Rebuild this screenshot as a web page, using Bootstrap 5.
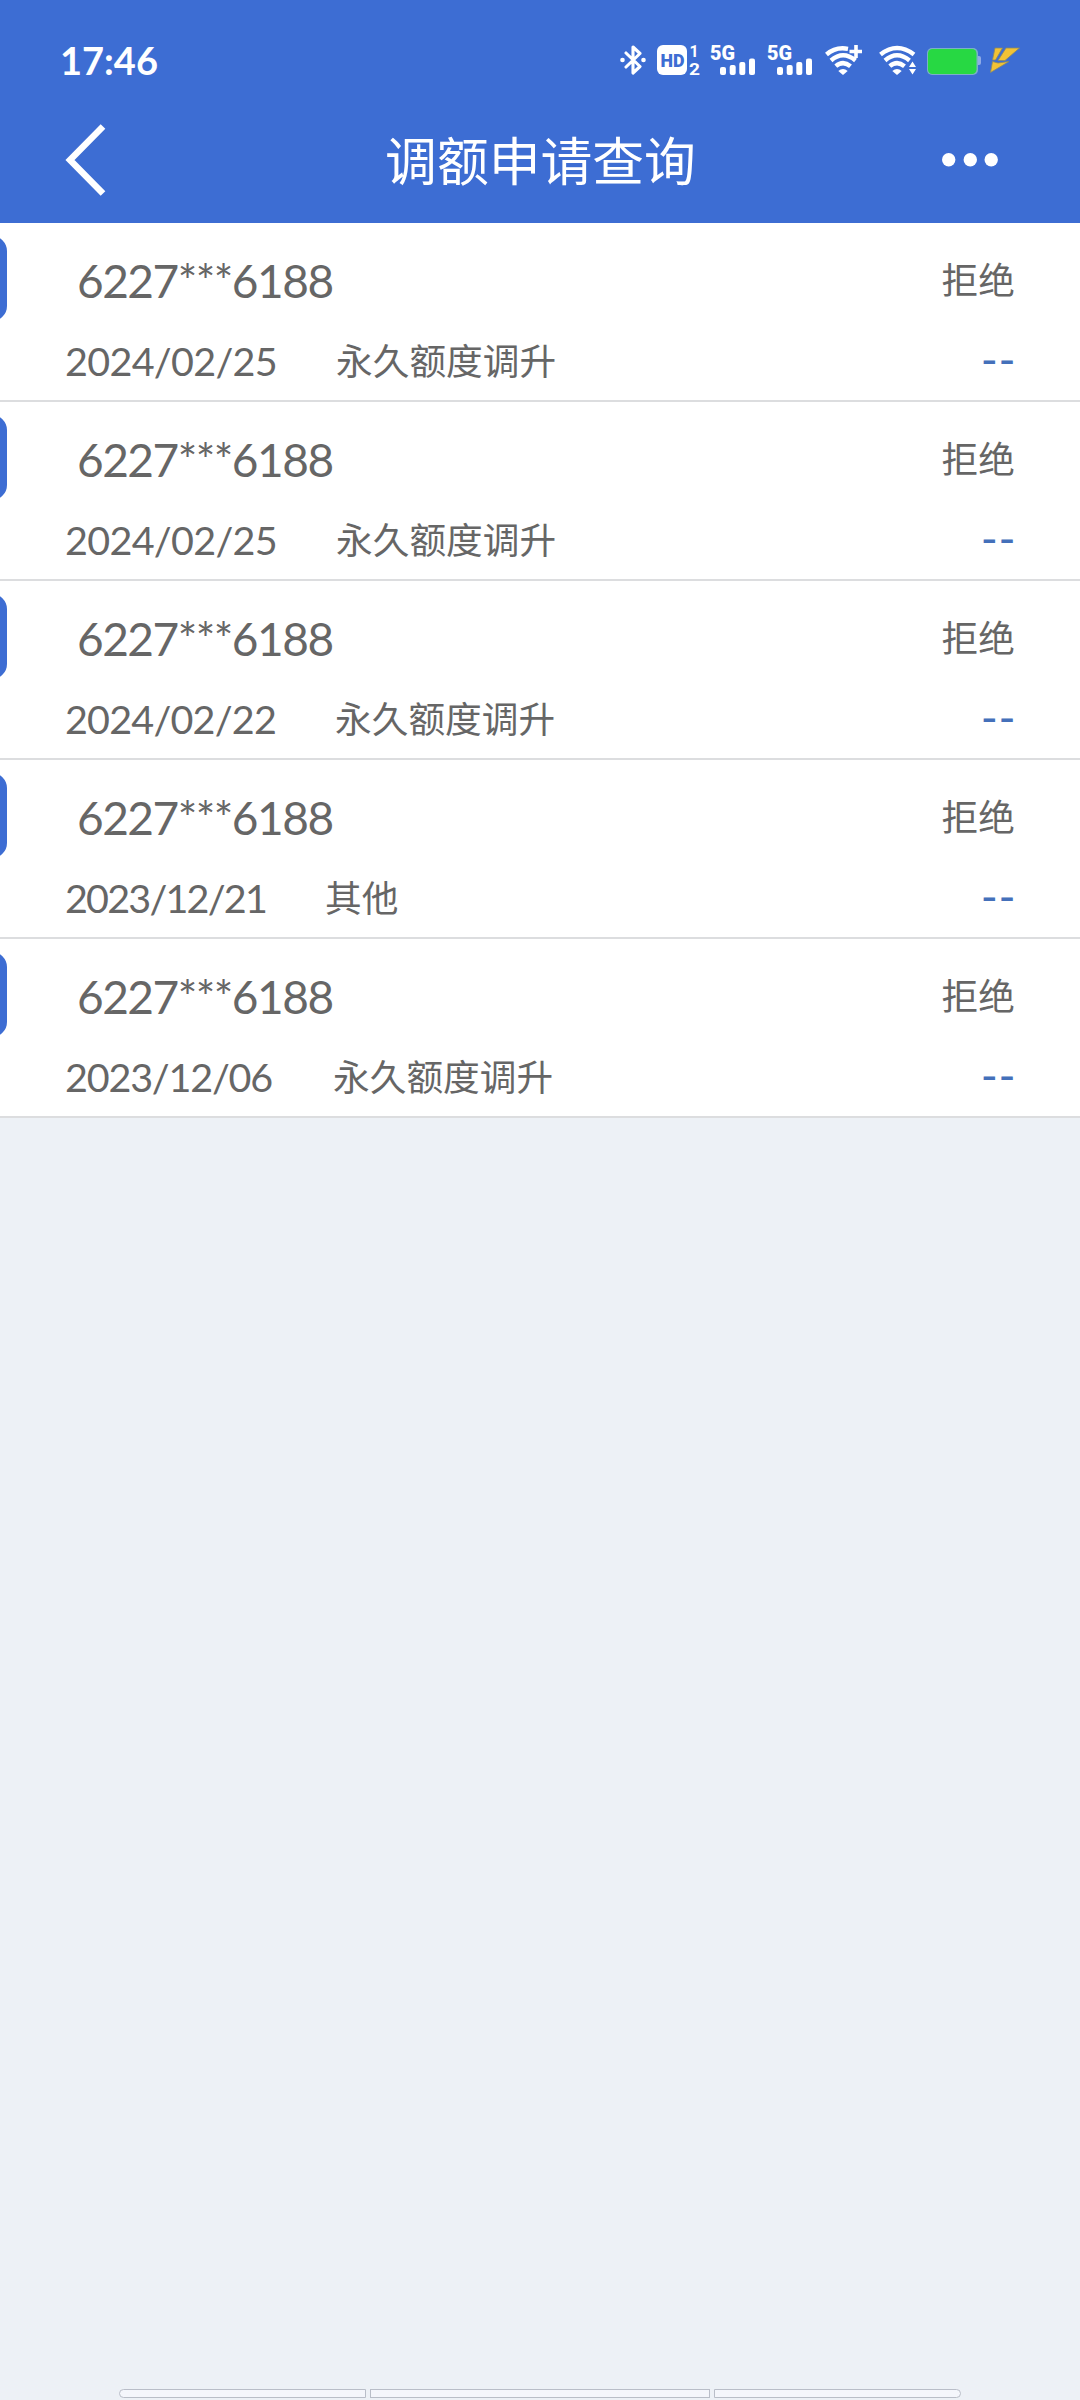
<!DOCTYPE html>
<html lang="zh-CN">
<head>
    <meta charset="UTF-8">
    <meta name="viewport" content="width=device-width, initial-scale=1.0">
    <title>调额申请查询</title>
    <link href="https://cdn.jsdelivr.net/npm/bootstrap@5.3.0/dist/css/bootstrap.min.css" rel="stylesheet">
    <style>
        body {
            background-color: #edf1f6;
            color: #666;
            font-family: Lato, "Noto Sans CJK SC", sans-serif;
            overflow: hidden;
        }
        .top-area {
            height: 223px;
            background-color: #3d6dd3;
        }
        .status-bar {
            height: 120px;
            padding: 0 60px;
        }
        .status-bar svg {
            display: block;
        }
        .clock {
            font-size: 38px;
            font-weight: 700;
            line-height: 120px;
        }
        .title-bar {
            height: 80px;
            padding: 0 82px 0 65px;
        }
        .page-title {
            font-size: 51.8px;
            font-weight: 400;
            line-height: 80px;
            margin-left: 33px;
            padding-top: 1px;
        }
        .record {
            height: 179px;
            border-bottom: 2px solid #dcdddf;
            padding: 0 66px 0 65px;
        }
        /* card thumbnail sliding in from the left edge */
        .card-tab {
            left: -93px;
            top: 13px;
            width: 100px;
            height: 85px;
            border-radius: 15px;
            background-color: #3d6dd3;
        }
        .line-top {
            height: 117px;
        }
        .line-bottom {
            height: 42px;
        }
        .acct {
            font-size: 46px;
            line-height: 115px;
            letter-spacing: -1.5px;
            margin-left: 12px;
            padding-bottom: 2px;
        }
        .apply-date {
            font-size: 39.5px;
            line-height: 42px;
            white-space: nowrap;
        }
        .kind, .result {
            font-size: 36.7px;
            line-height: 42px;
        }
        .result {
            padding-bottom: 3px;
            margin-right: -1px;
        }
        .amount {
            color: #4470ba;
            font-size: 46px;
            line-height: 37px;
            letter-spacing: 0.5px;
            margin-right: -2px;
        }
        .nav-hint {
            height: 9px;
            border: 1px solid #b9bec8;
            background-color: #f4f6fb;
        }
        .nav-hints {
            padding-bottom: 2px;
        }
    </style>
</head>
<body class="vh-100 d-flex flex-column">

<!-- Header -->
<header class="top-area text-white">
    <div class="status-bar d-flex align-items-center">
        <span class="clock">17:46</span>
        <div class="d-flex align-items-center ms-auto">
            <!-- Bluetooth -->
            <svg width="26" height="30" viewBox="0 0 26 30" fill="none" stroke="#fff" stroke-width="3.1" stroke-linejoin="round" stroke-linecap="round">
                <path d="M6 8 L20 21.5 L13 28 V2 L20 8.5 L6 22"/>
                <circle cx="2.5" cy="15" r="2.3" fill="#fff" stroke="none"/>
                <circle cx="23.5" cy="15" r="2.3" fill="#fff" stroke="none"/>
            </svg>
            <!-- HD 1/2 -->
            <svg style="margin-left: 11px" width="46" height="42" viewBox="0 -6 46 42" font-family="Roboto, sans-serif" font-weight="900">
                <rect width="30" height="30" rx="6" fill="#fff"/>
                <text x="3.5" y="21.5" font-size="18" textLength="24" lengthAdjust="spacingAndGlyphs" fill="#3d6dd3">HD</text>
                <text x="32.5" y="12" font-size="16" font-weight="700" fill="#fff">1</text>
                <text x="32" y="29.5" font-size="17" font-weight="700" textLength="11" lengthAdjust="spacingAndGlyphs" fill="#fff">2</text>
            </svg>
            <!-- 5G signal x2 -->
            <svg style="margin-left: 6px" width="48" height="42" viewBox="-2 -6 48 42" fill="#fff">
                <text x="-1" y="14.5" font-family="Roboto, sans-serif" font-weight="900" font-size="20" textLength="25" lengthAdjust="spacingAndGlyphs">5G</text>
                <rect x="9" y="22" width="6" height="8" rx="2"/>
                <rect x="18.7" y="20" width="6" height="10" rx="2"/>
                <rect x="28.3" y="17" width="6" height="13" rx="2"/>
                <rect x="38" y="13.5" width="6" height="16.5" rx="2"/>
            </svg>
            <svg style="margin-left: 9px" width="48" height="42" viewBox="-2 -6 48 42" fill="#fff">
                <text x="-1" y="14.5" font-family="Roboto, sans-serif" font-weight="900" font-size="20" textLength="25" lengthAdjust="spacingAndGlyphs">5G</text>
                <rect x="9" y="22" width="6" height="8" rx="2"/>
                <rect x="18.7" y="20" width="6" height="10" rx="2"/>
                <rect x="28.3" y="17" width="6" height="13" rx="2"/>
                <rect x="38" y="13.5" width="6" height="16.5" rx="2"/>
            </svg>
            <!-- Wifi plus -->
            <svg style="margin-left: 11px" width="37" height="30" viewBox="0 0 37 30" fill="none" stroke="#fff" stroke-width="4.4">
                <path d="M1.5 9.5 Q10.5 1.5 23 3.8"/>
                <path d="M6 15.5 Q18 5 30.5 15.5"/>
                <path d="M10.8 21.2 Q18 15 25.5 21.2"/>
                <path d="M13.3 26 Q18 22 22.7 26 L18 30 Z" fill="#fff" stroke="none"/>
                <path d="M31 0 V13 M24.5 6.5 H37" stroke-width="3.6"/>
            </svg>
            <!-- Wifi activity -->
            <svg style="margin-left: 17px" width="37" height="30" viewBox="0 0 37 30" fill="none" stroke="#fff" stroke-width="4.4">
                <path d="M1.5 9.5 Q18 -3.5 35 9.5"/>
                <path d="M6 15.5 Q18 5 30.5 15.5"/>
                <path d="M10.8 21.2 Q18 15 25.5 21.2"/>
                <path d="M13.3 26 Q18 22 22.7 26 L18 30 Z" fill="#fff" stroke="none"/>
                <path d="M33.5 16.5 L37 22 H30 Z M30 24 H37 L33.5 29.5 Z" fill="#fff" stroke="none"/>
            </svg>
            <!-- Battery -->
            <svg style="margin-left: 11px" width="54" height="30" viewBox="0 0 54 30">
                <rect x="49" y="11" width="5" height="9" rx="2" fill="#8fabe6"/>
                <rect x="0" y="3" width="51" height="27" rx="5" fill="#7bb0c8"/>
                <rect x="1" y="4" width="48.5" height="25" rx="4.5" fill="#27d843"/>
            </svg>
            <!-- Charging bolt -->
            <svg style="margin-left: 9px" width="30" height="30" viewBox="0 0 30 30" fill="#f2c235" stroke="#8b8a62" stroke-width="0.8">
                <path d="M5 3 H12.5 L5.5 15 H2.5 Z"/>
                <path d="M16 3 H29.5 L15 15.5 H8 Z"/>
                <path d="M2.5 16.5 L8 18 L19 16.5 L0.5 27.5 Z"/>
            </svg>
        </div>
    </div>
    <div class="title-bar d-flex align-items-center justify-content-between">
        <svg width="41" height="72" viewBox="0 0 41 72" fill="none" stroke="#fff" stroke-width="6.5">
            <path d="M38 2.5 L5 36 L38 69.5"/>
        </svg>
        <h1 class="page-title mb-0">调额申请查询</h1>
        <svg width="56" height="14" viewBox="0 0 56 14" fill="#fff">
            <circle cx="6.7" cy="6.8" r="6.7"/>
            <circle cx="28.3" cy="6.8" r="6.7"/>
            <circle cx="49.2" cy="6.8" r="6.7"/>
        </svg>
    </div>
</header>

<!-- Record list -->
<main id="recordList" class="bg-white"></main>

<!-- System navigation hints -->
<footer class="nav-hints d-flex justify-content-center gap-1 mt-auto">
    <div class="nav-hint rounded-start-pill" style="width: 247px"></div>
    <div class="nav-hint" style="width: 340px"></div>
    <div class="nav-hint rounded-end-pill" style="width: 247px"></div>
</footer>

<script src="https://cdn.jsdelivr.net/npm/bootstrap@5.3.0/dist/js/bootstrap.bundle.min.js"></script>
<script>
    // dateWidth: room the date takes before the application type
    // tracking: letter spacing, tighter for dates with narrow digits
    const records = [
        { date: '2024/02/25', kind: '永久额度调升', dateWidth: 271, tracking: -0.7 },
        { date: '2024/02/25', kind: '永久额度调升', dateWidth: 271, tracking: -0.7 },
        { date: '2024/02/22', kind: '永久额度调升', dateWidth: 270, tracking: -0.8 },
        { date: '2023/12/21', kind: '其他', dateWidth: 260, tracking: -1.8 },
        { date: '2023/12/06', kind: '永久额度调升', dateWidth: 268, tracking: -1.2 }
    ];

    document.getElementById('recordList').innerHTML = records.map(r => `
        <div class="record position-relative">
            <div class="card-tab position-absolute"></div>
            <div class="line-top d-flex justify-content-between align-items-center">
                <span class="acct">6227***6188</span>
                <span class="result">拒绝</span>
            </div>
            <div class="line-bottom d-flex">
                <span class="apply-date" style="width: ${r.dateWidth}px; letter-spacing: ${r.tracking}px">${r.date}</span>
                <span class="kind">${r.kind}</span>
                <span class="amount ms-auto">--</span>
            </div>
        </div>
    `).join('');
</script>

</body>
</html>
